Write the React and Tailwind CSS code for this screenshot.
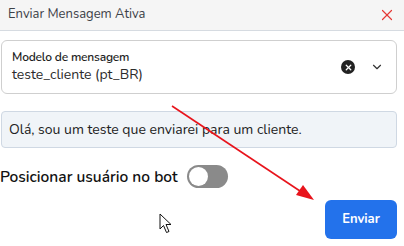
import { X, ChevronDown } from "lucide-react";

const font = { fontFamily: '"Nunito", "Noto Sans", "Open Sans", sans-serif' };

export default function App() {
  return (
    <div className="relative w-[404px] h-[246px] overflow-hidden bg-white" style={font}>
      <div className="flex items-center justify-between h-[31px] pl-2 pr-[8px] bg-[#f5f5f5] border-b border-[#d6dbe1]">
        <span className="text-[13px] text-[#3d4148]">Enviar Mensagem Ativa</span>
        <X className="w-[18px] h-[18px] text-[#e53935]" strokeWidth={1.6} />
      </div>

      <div className="pr-[7px] pl-[1px] pt-[9px]">
        <div className="flex items-center h-[54px] rounded-md border border-[#cfcfcf] pl-[10px] pr-[12px]">
          <div className="flex-1 flex flex-col">
            <span className="text-[12px] font-semibold text-[#1e1e1e] leading-[16px] tracking-[-0.2px]">Modelo de mensagem</span>
            <span className="text-[14px] text-[#2b2b2b] leading-[20px]">teste_cliente (pt_BR)</span>
          </div>
          <div className="flex items-center justify-center w-[14px] h-[14px] rounded-full bg-[#222] mr-[15px]">
            <X className="w-[9px] h-[9px] text-white" strokeWidth={3.5} />
          </div>
          <ChevronDown className="w-[14px] h-[14px] text-[#333]" strokeWidth={2} />
        </div>

        <div className="mt-[17px] flex items-center h-[37px] rounded border border-[#cfd8e3] bg-[#f0f4f8] px-[7px]">
          <span className="text-[14px] text-[#222]">Olá, sou um teste que enviarei para um cliente.</span>
        </div>

        <div className="mt-[17px] flex items-center gap-[9px] -ml-[1px]">
          <span className="text-[15.5px] font-semibold text-[#111]">Posicionar usuário no bot</span>
          <div className="flex items-center w-[41px] h-[23px] rounded-full bg-[#8a8a8a] px-[2px]">
            <div className="w-[19px] h-[19px] rounded-full bg-white" />
          </div>
        </div>

        <div className="mt-[12px] flex justify-end">
          <button className="w-[72px] h-[39px] rounded-md bg-[#2372eb] text-white text-[13px] font-bold">Enviar</button>
        </div>
      </div>

      <svg className="absolute inset-0 pointer-events-none" width="404" height="246">
        <line x1="172" y1="106" x2="306" y2="195" stroke="#e8141c" strokeWidth="1.6" />
        <polygon points="314,200 296,195 303,185" fill="#e8141c" />
      </svg>

      <svg className="absolute left-[159px] top-[213px]" width="14" height="22" viewBox="0 0 14 22">
        <path d="M1 1 L1 16 L4.5 12.5 L7.5 19.5 L10 18.5 L7 11.5 L12 11.5 Z" fill="white" stroke="#111" strokeWidth="1" strokeLinejoin="round" />
      </svg>
    </div>
  );
}
